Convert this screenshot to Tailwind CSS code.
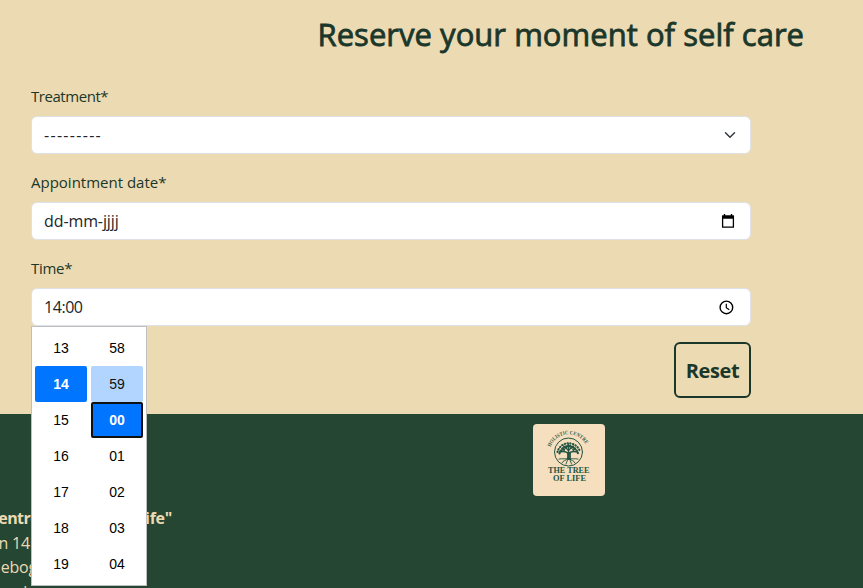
<!DOCTYPE html>
<html lang="en">
<head>
<meta charset="utf-8">
<title>Reserve your moment of self care</title>
<script src="https://cdn.jsdelivr.net/npm/@tailwindcss/browser@4"></script>
</head>
<body class="relative h-[588px] w-[863px] overflow-hidden bg-[#ecdab3] font-['Open_Sans','Noto_Sans',sans-serif] text-base text-[#1a372a]">
<main class="h-[414px] pt-[12px]">
  <h1 class="ml-[317.5px] h-[72px] whitespace-nowrap text-[31px] leading-[44px] font-normal tracking-[0.03px] [-webkit-text-stroke:0.8px_#1a372a]">Reserve your moment of self care</h1>
  <form class="ml-[31px] w-[720px]">
    <label class="block h-6 text-[15px] leading-[24px] tracking-[-0.45px]">Treatment*</label>
    <div class="mt-2 mb-4 flex h-[38px] items-center justify-between rounded-md border border-[#dee2e6] bg-white pr-[14px] pl-3 text-[#212529]">
      <span class="tracking-[1.3px]">---------</span>
      <svg class="h-3 w-3" viewBox="0 0 16 16" fill="none" stroke="#343a40" stroke-width="2" stroke-linecap="round" stroke-linejoin="round"><path d="m2 5 6 6 6-6"/></svg>
    </div>
    <label class="block h-6 text-[15px] leading-[24px]">Appointment date*</label>
    <div class="mt-2 mb-4 flex h-[38px] items-center justify-between rounded-md border border-[#dee2e6] bg-white pr-[14px] pl-3 text-[#212529]">
      <span class="tracking-[-0.1px]">dd-mm-jjjj</span>
      <svg class="mb-[1px] h-4 w-4" viewBox="0 0 16 16" fill="none"><path d="M2.6 3.2h10.8v11H2.6z" stroke="#000" stroke-width="1.3" stroke-linejoin="round"/><path d="M2 2.6h12v3.2H2zM3.8 1h1.4v2H3.8zM10.8 1h1.4v2h-1.4z" fill="#000"/></svg>
    </div>
    <label class="block h-6 text-[15px] leading-[24px] tracking-[-0.3px]">Time*</label>
    <div class="mt-2 mb-4 flex h-[38px] items-center justify-between rounded-md border border-[#dee2e6] bg-white pr-4 pl-3 text-[#212529]">
      <span class="tracking-[-0.45px]">14:00</span>
      <svg class="h-4 w-4" viewBox="0 0 16 16" fill="none" stroke="#000"><circle cx="8.4" cy="8.4" r="6.3" stroke-width="1.4"/><path d="M8.3 4.7v4l3 2" stroke-width="1.2"/></svg>
    </div>
    <div class="flex justify-end">
      <button type="button" class="h-14 w-[77px] rounded-md border-2 border-[#1a372a] pt-0.5 text-xl leading-none font-bold tracking-[-0.35px]">Reset</button>
    </div>
  </form>
</main>
<footer class="h-[174px] bg-[#254632] text-[#ecdab3]">
  <div class="flex h-[92px] pt-[10px] pl-[533px]">
    <svg class="h-[72px] w-[72px] rounded" viewBox="0 0 72 72">
      <rect width="72" height="72" fill="#f6dfbe"/>
      <defs><path id="arc" d="M17.500 23a19.500 19.500 0 0 1 36.500 0"/></defs>
      <text font-family="Liberation Serif" font-weight="bold" font-size="5.4" fill="#315b49"><textPath href="#arc" textLength="44" lengthAdjust="spacingAndGlyphs">HOLISTIC CENTRE</textPath></text>
      <g fill="none" stroke="#255442" stroke-linecap="round">
        <circle cx="35.5" cy="28" r="14" stroke-width="1"/>
        <path d="M35.500 34v-8M35.500 30c-2-3-5-3-9-2m9 2c2-3 5-3 9-2M35.500 27c-1-3-4-3-5-5m5 5c1-3 4-3 5-5M35.500 26v-6" stroke-width="1.3"/>
        <path d="M35 29v6h2v-6" stroke-width="1.8"/>
        <path d="M35 34c-2 2-6 0-9 1m10-1c2 2 6 0 9 1M34 35c-1 2-4 1-5 4m8-4c1 2 4 1 5 4M34.500 36l-1.500 4M37 36l1.500 4" stroke-width=".9"/>
        <g stroke-width="2.1">
          <path d="M24.500 28a11.500 11 0 0 1 22.500 0" stroke-dasharray=".4 2.400"/>
          <path d="M26.500 29.500a9.500 9.500 0 0 1 18.500 0" stroke-dasharray=".6 2.100"/>
          <path d="M28.500 27a7.500 7 0 0 1 14.500 0" stroke-dasharray=".5 2.200"/>
          <path d="M31 26a5 5 0 0 1 9.500 0" stroke-dasharray=".5 2.400"/>
        </g>
      </g>
      <g font-family="Liberation Serif" font-weight="bold" font-size="8.8" fill="#255442">
        <text x="15" y="48.8" textLength="41.5" lengthAdjust="spacingAndGlyphs">THE TREE</text>
        <text x="20" y="57.3" textLength="33" lengthAdjust="spacingAndGlyphs">OF LIFE</text>
      </g>
    </svg>
  </div>
  <div class="h-[82px] w-[172px] overflow-hidden leading-6 whitespace-nowrap">
    <p class="flex justify-between font-bold tracking-[-0.27px]"><span class="flex w-[39px] justify-end tracking-[-0.6px]">Holistic centre</span><span class="pr-0.5">"The Tree of Life"</span></p>
    <p class="flex w-[30px] justify-end pt-px tracking-[-0.2px]">Laan 14</p>
    <p class="-ml-[25px] tracking-[-0.2px]">Oldebogaard</p>
    <p class="flex w-[27px] justify-end pt-px tracking-[-0.2px]">nel</p>
  </div>
</footer>
<div class="absolute top-[326px] left-[31px] flex h-[260px] w-[116px] gap-1 border border-[#bfbfbf] bg-white px-[3px] pt-[3px] font-['Liberation_Sans',Arial,sans-serif] text-sm text-black">
  <ul class="w-[52px] text-center leading-9">
    <li class="h-9">13</li>
    <li class="h-9 rounded-xs bg-[#0075ff] font-bold text-white">14</li>
    <li class="h-9">15</li><li class="h-9">16</li><li class="h-9">17</li><li class="h-9">18</li><li class="h-9">19</li>
  </ul>
  <ul class="w-[52px] text-center leading-9">
    <li class="h-9">58</li>
    <li class="h-9 rounded-xs bg-[#b2d5ff] text-[#101010]">59</li>
    <li class="h-9 rounded-xs border-2 border-[#101010] bg-[#0075ff] leading-8 font-bold text-white">00</li>
    <li class="h-9">01</li><li class="h-9">02</li><li class="h-9">03</li><li class="h-9">04</li>
  </ul>
</div>
</body>
</html>
